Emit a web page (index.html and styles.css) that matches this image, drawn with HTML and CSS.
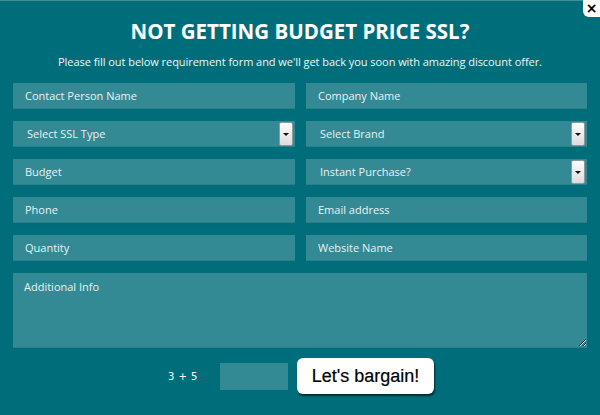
FILE: index.html
```html
<!DOCTYPE html>
<html lang="en">
<head>
    <meta charset="UTF-8">
    <title>Budget SSL</title>
    <link rel="stylesheet" href="styles.css">
</head>
<body>

<div class="popup">
    <span class="closeBtn">&times;</span>
    <h1 class="title">NOT GETTING BUDGET PRICE SSL?</h1>
    <p class="subtitle">Please fill out below requirement form and we'll get back you soon with amazing discount offer.</p>

    <form action="#" class="sslForm">
        <input type="text" placeholder="Contact Person Name">
        <input type="text" placeholder="Company Name">
        <div class="selectBox"><span>Select SSL Type</span><i class="arrow"></i></div>
        <div class="selectBox"><span>Select Brand</span><i class="arrow"></i></div>
        <input type="text" placeholder="Budget">
        <div class="selectBox"><span>Instant Purchase?</span><i class="arrow"></i></div>
        <input type="text" placeholder="Phone">
        <input type="text" placeholder="Email address">
        <input type="text" placeholder="Quantity">
        <input type="text" placeholder="Website Name">
        <textarea class="info" placeholder="Additional Info"></textarea>

        <div class="submitRow">
            <span class="captcha">3 + 5</span>
            <input type="text" class="captchaInput">
            <button type="submit" class="bargainBtn">Let's bargain!</button>
        </div>
    </form>
</div>

</body>
</html>
```

FILE: styles.css
```css
body {
    margin: 0;
    padding: 0;
    background-color: #006e7a;
    font-family: 'Open Sans', sans-serif;
    color: #fff;
}
.popup {
    position: relative;
    height: 415px;
    padding: 15px 13px 0;
    box-sizing: border-box;
    border-top: 1px solid #3f8f98;
}
.closeBtn {
    position: absolute;
    top: -1px;
    right: 0;
    width: 17px;
    height: 17px;
    padding-top: 1px;
    box-sizing: border-box;
    background: #fff;
    color: #000;
    border-bottom-left-radius: 6px;
    font: bold 14px/14px 'DejaVu Sans', sans-serif;
    text-align: center;
}
.title {
    margin: 0;
    font-size: 20.5px;
    line-height: 30px;
    font-weight: 700;
    text-align: center;
}
.subtitle {
    margin: 8px 0 13px;
    font-size: 11px;
    line-height: 16px;
    letter-spacing: -0.05px;
    text-align: center;
    color: #eef6f7;
}
.sslForm {
    display: grid;
    grid-template-columns: 282px 281px;
    column-gap: 11px;
    row-gap: 12px;
}
.sslForm input[type="text"],
.selectBox,
.info {
    box-sizing: border-box;
    height: 26px;
    margin: 0;
    border: none;
    border-bottom: 1px solid #2a7f89;
    background-color: #348a94;
    color: #fff;
    font-family: 'Open Sans', sans-serif;
    font-size: 11px;
    padding: 0 12px;
    outline: none;
}
.sslForm input::placeholder,
.info::placeholder {
    color: #e6f2f3;
    opacity: 1;
}
.selectBox {
    display: flex;
    align-items: center;
    justify-content: space-between;
    padding: 0 2px 0 14px;
    color: #e6f2f3;
}
.arrow {
    width: 12px;
    height: 22px;
    border: 1px solid #8c9a9c;
    border-radius: 2px;
    background: linear-gradient(#fdfdfd, #dcdcdc);
    position: relative;
}
.arrow::after {
    content: "";
    position: absolute;
    left: 3px;
    top: 10px;
    border-left: 3px solid transparent;
    border-right: 3px solid transparent;
    border-top: 3px solid #111;
}
.info {
    grid-column: 1 / 3;
    height: 75px;
    padding: 6px 11px;
    resize: vertical;
    line-height: 16px;
}
.submitRow {
    grid-column: 1 / 3;
    display: flex;
    align-items: center;
    margin-top: -2px;
    padding-left: 155px;
}
.captcha {
    font-family: 'DejaVu Sans', sans-serif;
    font-size: 10px;
    word-spacing: 1px;
    width: 52px;
}
.sslForm input.captchaInput {
    width: 68px;
    height: 27px;
    border-bottom: none;
    margin-right: 9px;
}
.bargainBtn {
    width: 137px;
    height: 36px;
    background: #fff;
    border: none;
    border-radius: 6px;
    box-shadow: 1px 2px 2px rgba(0,0,0,0.6);
    font-family: 'Liberation Sans', Arial, sans-serif;
    font-size: 18px;
    color: #000;
    -webkit-text-stroke: 0.2px #000;
    cursor: pointer;
}
```
